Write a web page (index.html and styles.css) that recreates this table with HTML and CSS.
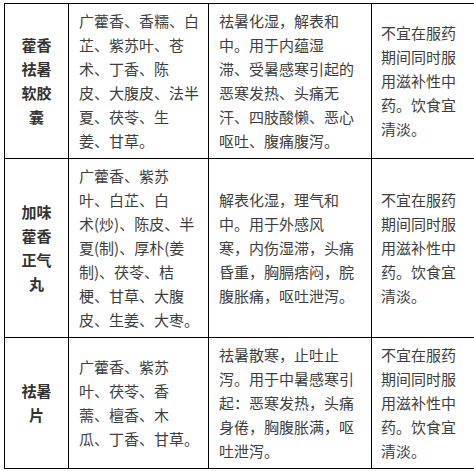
FILE: index.html
```html
<!DOCTYPE html>
<html lang="zh-CN">
<head>
<meta charset="utf-8">
<title>藿香类中成药</title>
<link rel="stylesheet" href="styles.css">
</head>
<body>
<table class="drug-table">
  <colgroup>
    <col class="c-name">
    <col class="c-comp">
    <col class="c-use">
    <col class="c-note">
  </colgroup>
  <tbody>
    <tr>
      <td class="name">藿香<br>祛暑<br>软胶<br>囊</td>
      <td>广藿香、香糯、白<br>芷、紫苏叶、苍<br>术、丁香、陈<br>皮、大腹皮、法半<br>夏、茯苓、生<br>姜、甘草。</td>
      <td>祛暑化湿，解表和<br>中。用于内蕴湿<br>滞、受暑感寒引起的<br>恶寒发热、头痛无<br>汗、四肢酸懒、恶心<br>呕吐、腹痛腹泻。</td>
      <td class="note">不宜在服药<br>期间同时服<br>用滋补性中<br>药。饮食宜<br>清淡。</td>
    </tr>
    <tr>
      <td class="name">加味<br>藿香<br>正气<br>丸</td>
      <td>广藿香、紫苏<br>叶、白芷、白<br>术(炒)、陈皮、半<br>夏(制)、厚朴(姜<br>制)、茯苓、桔<br>梗、甘草、大腹<br>皮、生姜、大枣。</td>
      <td>解表化湿，理气和<br>中。用于外感风<br>寒，内伤湿滞，头痛<br>昏重，胸膈痞闷，脘<br>腹胀痛，呕吐泄泻。</td>
      <td class="note">不宜在服药<br>期间同时服<br>用滋补性中<br>药。饮食宜<br>清淡。</td>
    </tr>
    <tr>
      <td class="name">祛暑<br>片</td>
      <td>广藿香、紫苏<br>叶、茯苓、香<br>薷、檀香、木<br>瓜、丁香、甘草。</td>
      <td>祛暑散寒，止吐止<br>泻。用于中暑感寒引<br>起：恶寒发热，头痛<br>身倦，胸腹胀满，呕<br>吐泄泻。</td>
      <td class="note">不宜在服药<br>期间同时服<br>用滋补性中<br>药。饮食宜<br>清淡。</td>
    </tr>
  </tbody>
</table>
</body>
</html>
```
FILE: styles.css
```css
html, body {
  margin: 0;
  padding: 0;
  overflow: hidden;
  background: #fff;
}

body {
  padding: 3px 0 0 4px;
  font-family: "Noto Sans CJK SC", "Noto Sans", sans-serif;
  font-size: 15px;
  line-height: 24px;
  color: #3e3e3e;
}

.drug-table {
  border-collapse: collapse;
  table-layout: fixed;
  width: 480px;
}

.c-name { width: 64px; }
.c-comp { width: 140px; }
.c-use { width: 163px; }
.c-note { width: 113px; }

.drug-table td {
  border: 1px solid #000;
  padding: 5px 9px 5px 10px;
  vertical-align: middle;
  white-space: nowrap;
  overflow: hidden;
}

.drug-table td.name {
  text-align: center;
  font-weight: bold;
  color: #333;
  padding-left: 0;
  padding-right: 0;
}

.drug-table td.note {
  padding-left: 9px;
}
```
